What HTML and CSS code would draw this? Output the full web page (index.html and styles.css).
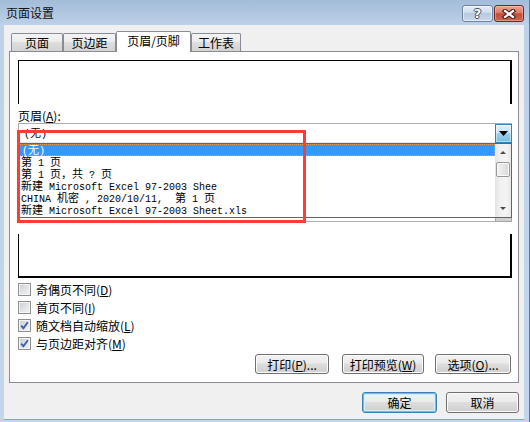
FILE: index.html
```html
<!DOCTYPE html>
<html lang="zh-CN">
<head>
<meta charset="utf-8">
<title>页面设置</title>
<link rel="stylesheet" href="styles.css">
</head>
<body>
<div class="win">
  <div class="titlebar">
    <span class="title">页面设置</span>
    <div class="capbtns">
      <span class="cap help">?</span>
      <span class="cap close">
        <svg width="14" height="10" viewBox="0 0 14 10">
          <path d="M3 2 L11 8 M11 2 L3 8" stroke="#4a1c16" stroke-width="4.4" stroke-linecap="square" fill="none"/>
          <path d="M3 2 L11 8 M11 2 L3 8" stroke="#ffffff" stroke-width="2.2" stroke-linecap="square" fill="none"/>
        </svg>
      </span>
    </div>
  </div>
  <div class="client">
    <div class="tabs">
      <div class="tab w1">页面</div>
      <div class="tab w2">页边距</div>
      <div class="tab sel">页眉/页脚</div>
      <div class="tab w4">工作表</div>
    </div>
    <div class="panel">
      <div class="hbox"></div>
      <div class="label">页眉(<u>A</u>):</div>
      <div class="combo">
        <span class="cval mono">(<span class="cj">无</span>)</span>
        <span class="ddbtn hot">
          <svg width="9" height="5" viewBox="0 0 9 5"><path d="M0 0 H9 L4.5 5 Z" fill="#000"/></svg>
        </span>
      </div>
      <div class="combo foot">
        <span class="ddbtn"></span>
      </div>
      <div class="fbox"></div>
      <div class="checks">
        <div class="chk"><span class="box"></span><span>奇偶页不同(<u>D</u>)</span></div>
        <div class="chk"><span class="box"></span><span>首页不同(<u>I</u>)</span></div>
        <div class="chk"><span class="box"><svg width="11" height="11" viewBox="0 0 11 11"><path d="M2.2 5.6 L4.4 8.2 L8.8 2.2" stroke="#3f5fa6" stroke-width="1.9" fill="none"/></svg></span><span>随文档自动缩放(<u>L</u>)</span></div>
        <div class="chk"><span class="box"><svg width="11" height="11" viewBox="0 0 11 11"><path d="M2.2 5.6 L4.4 8.2 L8.8 2.2" stroke="#3f5fa6" stroke-width="1.9" fill="none"/></svg></span><span>与页边距对齐(<u>M</u>)</span></div>
      </div>
      <div class="prow">
        <button class="btn b1">打印(<u>P</u>)...</button>
        <button class="btn b2">打印预览(<u>W</u>)</button>
        <button class="btn b3">选项(<u>O</u>)...</button>
      </div>
    </div>
    <div class="drow">
      <button class="btn def">确定</button>
      <button class="btn cancel">取消</button>
    </div>
  </div>

  <div class="dd">
    <div class="rows mono">
      <div class="row selrow">(<span class="cj">无</span>)</div>
      <div class="row"><span class="cj">第</span> 1 <span class="cj">页</span></div>
      <div class="row"><span class="cj">第</span> 1 <span class="cj">页，共</span> ? <span class="cj">页</span></div>
      <div class="row"><span class="cj">新建</span> Microsoft Excel 97-2003 Shee</div>
      <div class="row">CHINA <span class="cj">机密</span> , 2020/10/11,  <span class="cj">第</span> 1 <span class="cj">页</span></div>
      <div class="row"><span class="cj">新建</span> Microsoft Excel 97-2003 Sheet.xls</div>
    </div>
    <div class="sb">
      <div class="sbarrow up"></div>
      <div class="thumb"></div>
      <div class="sbarrow down"></div>
    </div>
  </div>

  <div class="redbox"></div>
</div>
</body>
</html>
```

FILE: styles.css
```css
html, body {
  margin: 0;
  padding: 0;
  background: #c3d6ec;
}

.win {
  position: relative;
  width: 530px;
  height: 422px;
  box-sizing: border-box;
  display: flex;
  flex-direction: column;
  background: linear-gradient(to bottom, #a3bcd9 0, #bdd1e8 25px, #c3d6ec 100%);
  border-right: 1px solid #5f7c9e;
  font-family: "Noto Sans CJK SC", "Noto Sans", sans-serif;
  font-size: 12px;
  color: #000;
  overflow: hidden;
}

.titlebar {
  flex: none;
  height: 25px;
  display: flex;
  align-items: flex-start;
  padding: 0 5px 0 6px;
}

.title {
  line-height: 25px;
  font-size: 12px;
  color: #111;
}

.capbtns {
  margin-left: auto;
  margin-top: 5px;
  display: flex;
  gap: 1px;
}

.cap {
  box-sizing: border-box;
  height: 17px;
  border-radius: 3px;
  display: flex;
  align-items: center;
  justify-content: center;
}

.help {
  width: 31px;
  border: 1px solid #6d83a2;
  background: linear-gradient(to bottom, #e6eef7 0, #cfdcec 45%, #b7cae0 50%, #c9d9ec 100%);
  box-shadow: inset 0 0 0 1px rgba(255, 255, 255, 0.5);
  font-family: "DejaVu Sans", sans-serif;
  font-weight: bold;
  font-size: 13px;
  color: #fff;
  text-shadow: 1px 0 0 #3e4d66, -1px 0 0 #3e4d66, 0 1px 0 #3e4d66, 0 -1px 0 #3e4d66;
  line-height: 15px;
}

.close {
  width: 30px;
  border: 1px solid #6c2a22;
  background: linear-gradient(to bottom, #eaa494 0, #d97c69 45%, #c64b36 52%, #d0644f 100%);
  box-shadow: inset 0 0 0 1px rgba(255, 220, 210, 0.4);
}

.client {
  flex: 1;
  margin: 0 5px 3px 4px;
  background: #f0f0f0;
  padding: 6px 5px 0 5px;
  display: flex;
  flex-direction: column;
  box-shadow: 0 1px 0 #5eb2e0;
}

.tabs {
  flex: none;
  height: 20px;
  display: flex;
  align-items: flex-end;
  padding-left: 2px;
  position: relative;
  z-index: 1;
}

.tab {
  box-sizing: border-box;
  height: 18px;
  border: 1px solid #898c95;
  border-bottom: none;
  border-radius: 2px 2px 0 0;
  background: linear-gradient(to bottom, #f4f4f4 0, #ececec 45%, #dedede 50%, #d2d2d2 100%);
  text-align: center;
  line-height: 17px;
  white-space: nowrap;
}

.w1 { width: 52px; }
.w2 { width: 53px; }
.w4 { width: 50px; }

.tab.sel {
  width: 75px;
  height: 21px;
  margin-bottom: -1px;
  background: #fff;
  line-height: 17px;
}

.panel {
  box-sizing: border-box;
  border: 1px solid #898c95;
  background: #fff;
  padding: 8px 6px 8px 8px;
  display: flex;
  flex-direction: column;
}

.hbox {
  height: 44px;
  box-sizing: border-box;
  border-top: 1px solid #000;
  border-left: 1px solid #000;
  border-right: 2px solid #000;
}

.label {
  margin-top: 4px;
  height: 15px;
  line-height: 15px;
}

.mono {
  font-family: "Liberation Mono", "DejaVu Sans Mono", monospace;
  font-size: 10px;
  line-height: 12px;
}

.cj {
  font-family: "Noto Sans CJK SC", sans-serif;
  font-size: 11px;
  line-height: 10px;
}

.combo {
  position: relative;
  box-sizing: border-box;
  height: 20px;
  border: 1px solid #abadb3;
  border-bottom-color: #e3e9ef;
  background: #fff;
}

.cval {
  position: absolute;
  left: 5px;
  top: 3px;
  white-space: nowrap;
}

.ddbtn {
  position: absolute;
  right: -1px;
  top: 0;
  bottom: -1px;
  width: 17px;
  box-sizing: border-box;
  border: 1px solid #a6a6a6;
  background: linear-gradient(to bottom, #f2f2f2, #e2e2e2 50%, #d6d6d6 51%, #cfcfcf);
  display: flex;
  align-items: center;
  justify-content: center;
}

.ddbtn.hot {
  border-color: #3c7fb1;
  background: linear-gradient(to bottom, #e3f3fc 0, #c3e3f6 45%, #98cdee 52%, #7cbce8 100%);
  box-shadow: inset 0 0 0 1px rgba(255, 255, 255, 0.45);
}

.combo.foot {
  margin-top: 57px;
  height: 22px;
  border-bottom-color: #abadb3;
}

.fbox {
  margin-top: 12px;
  height: 44px;
  box-sizing: border-box;
  border-left: 1px solid #000;
  border-right: 2px solid #000;
  border-bottom: 2px solid #000;
}

.checks {
  margin-top: 2px;
  display: flex;
  flex-direction: column;
}

.chk {
  height: 18px;
  display: flex;
  align-items: center;
  gap: 5px;
  white-space: nowrap;
}

.box {
  width: 13px;
  height: 13px;
  box-sizing: border-box;
  border: 1px solid #8f8f8f;
  background: linear-gradient(135deg, #c8ccd2 0, #e4e6e9 60%, #f2f2f3 100%);
  box-shadow: inset 0 0 0 1px #f4f4f4;
  display: flex;
  align-items: center;
  justify-content: center;
}

.box svg {
  display: block;
}

.prow {
  margin-top: 2px;
  display: flex;
  justify-content: flex-end;
  padding-right: 1px;
}

.btn {
  box-sizing: border-box;
  height: 20px;
  padding: 0;
  border: 1px solid #707070;
  border-radius: 3px;
  background: linear-gradient(to bottom, #f2f2f2 0, #ebebeb 45%, #dddddd 50%, #cfcfcf 100%);
  box-shadow: inset 0 0 0 1px #fbfbfb;
  font-family: "Noto Sans CJK SC", "Noto Sans", sans-serif;
  font-size: 12px;
  line-height: 17px;
  color: #000;
  white-space: nowrap;
}

.b1 { width: 74px; margin-right: 13px; }
.b2 { width: 82px; margin-right: 11px; }
.b3 { width: 76px; }

.drow {
  margin-top: 9px;
  display: flex;
  justify-content: flex-end;
  gap: 9px;
}

.drow .btn {
  height: 21px;
}

.def {
  width: 75px;
  border-color: #3c7fb1;
  box-shadow: inset 0 0 0 1px #5dc4f3, inset 0 0 0 2px #d3eefb;
}

.cancel {
  width: 73px;
}

/* open dropdown list */
.dd {
  position: absolute;
  left: 18px;
  top: 143px;
  width: 494px;
  height: 75px;
  box-sizing: border-box;
  border: 1px solid #646464;
  background: #fff;
  display: flex;
  z-index: 5;
}

.rows {
  flex: 1;
  min-width: 0;
}

.row {
  height: 12px;
  padding-left: 2px;
  white-space: pre;
}

.row.selrow {
  background: #3399ff;
  color: #fff;
  outline: 1px dotted #d99a5e;
  outline-offset: -1px;
  padding-left: 3px;
}

.sb {
  width: 16px;
  position: relative;
  background: linear-gradient(to right, #e4e4e4 0, #f0f0f0 30%, #f4f4f4 70%, #e9e9e9 100%);
}

.sbarrow {
  position: absolute;
  left: 0;
  width: 16px;
  height: 16px;
}

.sbarrow.up { top: 0; }
.sbarrow.down { bottom: 0; }

.sbarrow::after {
  content: "";
  position: absolute;
  left: 5px;
  width: 0;
  height: 0;
  border-left: 3px solid transparent;
  border-right: 3px solid transparent;
}

.sbarrow.up::after {
  top: 7px;
  border-bottom: 3px solid #4a4a4a;
}

.sbarrow.down::after {
  top: 6px;
  border-top: 3px solid #4a4a4a;
}

.thumb {
  position: absolute;
  left: 1px;
  right: 1px;
  top: 18px;
  height: 15px;
  box-sizing: border-box;
  border: 1px solid #979797;
  border-radius: 2px;
  background: linear-gradient(to right, #f4f4f4 0, #e6e6e6 50%, #d8d8d8 100%);
  box-shadow: inset 0 0 0 1px #fafafa;
}

/* annotation */
.redbox {
  position: absolute;
  left: 17px;
  top: 130px;
  width: 289px;
  height: 93px;
  box-sizing: border-box;
  border: 3px solid #ff3a3a;
  z-index: 10;
}
```
